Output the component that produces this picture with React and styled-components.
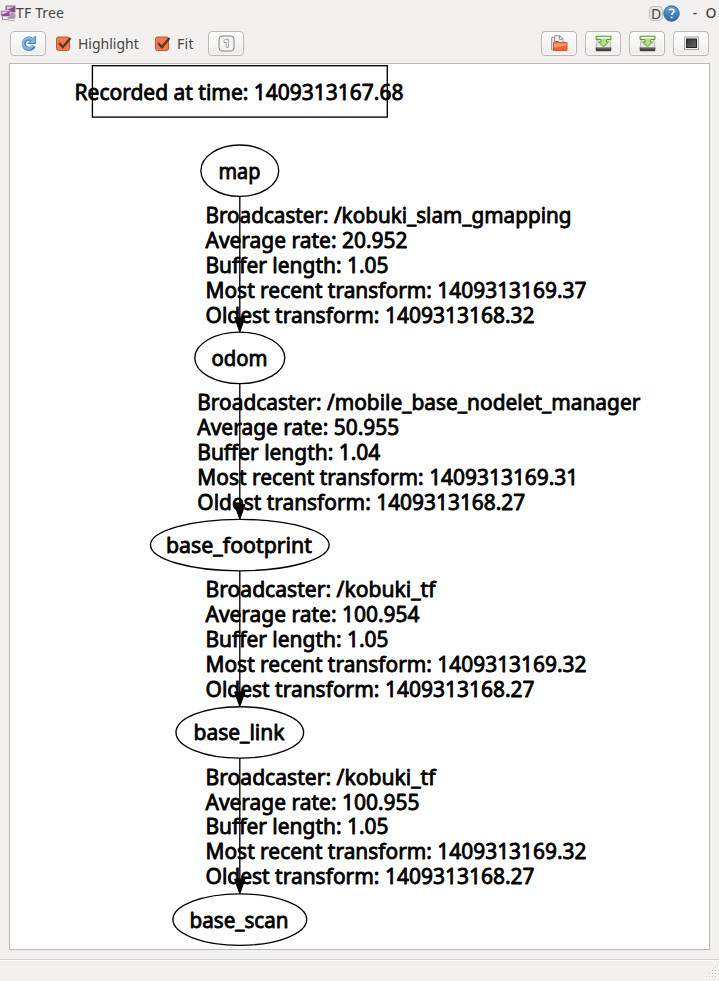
import React from "react";
import styled, { createGlobalStyle } from "styled-components";

const GlobalStyle = createGlobalStyle`
  * { box-sizing: border-box; }
  body { margin: 0; background: #f2f1f0; overflow: hidden; }
`;

const Window = styled.div`
  display: flex;
  flex-direction: column;
  width: 719px;
  height: 981px;
  background: #f2f1f0;
  color: #454545;
  font-family: "Noto Sans", "Open Sans", sans-serif;
  font-size: 14px;
`;

const TitleBar = styled.header`
  display: flex;
  align-items: center;
  height: 26px;
  flex: none;
  padding-right: 2px;
`;

const Title = styled.span`
  flex: 1;
  line-height: 26px;
  letter-spacing: 0.15px;
`;

const DockButton = styled.span`
  width: 14px;
  height: 15px;
  border: 1px solid #c3beb8;
  border-radius: 4px;
  background: #e9e7e4;
  font-size: 14px;
  line-height: 13px;
  text-align: center;
`;

const WindowMark = styled.span`
  width: ${(p) => p.$width}px;
  margin-left: ${(p) => p.$gap}px;
  line-height: 26px;
  font-weight: 500;
  text-align: center;
`;

const Toolbar = styled.div`
  display: flex;
  align-items: center;
  height: 35px;
  flex: none;
  padding: 0 10px;
`;

const ToolButton = styled.button`
  display: flex;
  align-items: center;
  justify-content: center;
  width: 36px;
  height: 25px;
  margin-left: ${(p) => p.$gap || 0}px;
  padding: 0;
  border: 1px solid #bbb8b5;
  border-radius: 4px;
  background: linear-gradient(#fdfdfd, #eeedeb);
  box-shadow: inset 0 0 0 1px rgba(255, 255, 255, 0.6);
`;

const CheckLabel = styled.label`
  display: flex;
  align-items: center;
  gap: 6px;
  width: ${(p) => p.$width}px;
  margin-left: ${(p) => p.$gap}px;
  line-height: 20px;
  letter-spacing: ${(p) => p.$tracking}px;
  white-space: nowrap;
`;

const FileActions = styled.div`
  display: flex;
  gap: 8px;
  margin-left: auto;
`;

const Canvas = styled.main`
  width: 701px;
  height: 887px;
  flex: none;
  margin: 2px 0 0 9px;
  border: 1px solid #bcbab8;
  background: #fff;
`;

const Graph = styled.svg`
  display: block;
  font-family: "Noto Sans", "Open Sans", sans-serif;
  font-size: 22px;
`;

const Outline = styled.g`
  fill: none;
  stroke: #000;
  stroke-width: 1.35;
`;

const GraphText = styled.text`
  fill: #000;
  stroke: #000;
  stroke-width: 0.85;
  stroke-linejoin: round;
`;

const StatusBar = styled.footer`
  display: flex;
  justify-content: flex-end;
  align-items: flex-end;
  height: 22px;
  margin-top: auto;
  border-top: 1px solid #d5d3d1;
  box-shadow: inset 0 1px #fff;
`;

const AppIcon = () => (
  <svg width="16" height="18" viewBox="0 0 16 18">
    <path d="M2.500 12v3.500h6" fill="none" stroke="#999" strokeWidth="1.2" />
    <rect x="5.5" y="1.5" width="10" height="7" rx="1" fill="#8d4b91" stroke="#bbb" />
    <path d="M6.500 2.500h8L7 6z" fill="#dcc5de" />
    <rect x="8" y="9.500" width="7" height="5" rx="1" fill="#b78bb9" stroke="#aaa" />
    <rect x="1" y="6.500" width="9" height="6" rx="1" fill="#8d4b91" stroke="#c5c5c5" />
    <path d="M2 7.500h7L2.500 10.500z" fill="#e5d3e6" />
    <path d="M8 16.500h7" stroke="#bbb" />
  </svg>
);

const HelpIcon = () => (
  <svg width="17" height="17" viewBox="0 0 17 17">
    <defs>
      <linearGradient id="help" x2="0" y2="1">
        <stop stopColor="#69a4d5" />
        <stop offset="1" stopColor="#2669a5" />
      </linearGradient>
    </defs>
    <circle cx="8.500" cy="8.500" r="7.700" fill="url(#help)" stroke="#28639b" />
    <path d="M6 5.300c1.200-1.500 5-1.400 5 .8 0 1.800-2.300 1.700-2.300 3.900" fill="none" stroke="#fff" strokeWidth="1.600" />
    <circle cx="8.600" cy="12.500" r="1.100" fill="#fff" />
  </svg>
);

const RefreshIcon = () => (
  <svg width="17" height="17" viewBox="0 0 17 17">
    <path d="M13.800 10.800A5.200 5.200 0 1 1 11.700 4.300" fill="none" stroke="#3d7fc1" strokeWidth="4.200" />
    <path d="M15.300 1.300V8.500H8L10.700 5.800 13 3.700z" fill="#84b6e6" stroke="#3d7fc1" strokeLinejoin="round" />
    <path d="M13 10.800A5.200 5.200 0 1 1 12.200 4.900" fill="none" stroke="#84b6e6" strokeWidth="2.400" />
  </svg>
);

const CheckIcon = () => (
  <svg width="17" height="17" viewBox="0 0 17 17">
    <rect x="1.500" y="2" width="13" height="13.500" rx="2" fill="#f3794f" stroke="#bd5c3b" />
    <path d="M4.200 8l3.600 4.300L15.500 3" fill="none" stroke="#54382f" strokeWidth="2.300" />
  </svg>
);

const FitOneIcon = () => (
  <svg width="17" height="17" viewBox="0 0 17 17">
    <rect x="1" y="1" width="15" height="15" rx="3" fill="#f4f4f3" stroke="#858585" />
    <path d="M6 5.500q1-1.200 2.300-1.200h2.200v8H8.200V7.500H6z" fill="#fff" stroke="#999" strokeWidth=".9" />
  </svg>
);

const OpenIcon = () => (
  <svg width="17" height="17" viewBox="0 0 17 17">
    <path d="M.7 15V2.500h3V.7h5l3.300 3V14z" fill="#eee" stroke="#909090" />
    <path d="M3.500 2.500V12M8.500 1v3.200h3.300" fill="none" stroke="#909090" />
    <path d="M2.500 8l1-1.500h4l1 1H16v8H2.500z" fill="#ed6534" stroke="#cf5a30" />
    <path d="M3 8.500h12.500v2L3 12.500z" fill="#f69a74" />
  </svg>
);

const SaveIcon = () => (
  <svg width="17" height="17" viewBox="0 0 17 17">
    <path d="M2.500 3h12l1.500 10H1z" fill="#e7e7e5" stroke="#b5b5b5" />
    <rect x=".7" y="12.300" width="15.600" height="4" rx="1" fill="#444" />
    <path d="M1.500 12.800h14" stroke="#aaa" />
    <path d="M1 1.200h15v3.300h-4.500V7H13.500l-5 4.800L3.500 7H6V4.500H1z" fill="#b6df80" stroke="#5f9d2d" />
    <path d="M2.500 2h12v1.500h-12z" fill="#fff" />
  </svg>
);

const ImageIcon = () => (
  <svg width="17" height="17" viewBox="0 0 17 17">
    <defs>
      <linearGradient id="shot" x2="1" y2="1">
        <stop stopColor="#333" />
        <stop offset="1" stopColor="#666" />
      </linearGradient>
    </defs>
    <rect x="1.500" y="2" width="14" height="12.500" fill="#f2f2f1" stroke="#a6a6a6" />
    <rect x="3.500" y="4" width="10" height="8.500" fill="url(#shot)" stroke="#222" />
  </svg>
);

const gripDots = [[9, 1], [6, 4], [9, 4], [3, 7], [6, 7], [9, 7], [0, 10], [3, 10], [6, 10], [9, 10]];

const ResizeGrip = () => (
  <svg width="13" height="15" viewBox="0 0 13 15">
    {gripDots.map(([x, y]) => (
      <g key={`${x}-${y}`}>
        <rect x={x} y={y} width="2" height="2" fill="#fff" />
        <rect x={x} y={y} width="1" height="1" fill="#bbb8b4" />
      </g>
    ))}
  </svg>
);

const nodes = [
  { name: "map", cy: 170.7, rx: 38.9, x: 218.5, width: 42 },
  { name: "odom", cy: 357.9, rx: 45, x: 211.5, width: 56 },
  { name: "base_footprint", cy: 545.1, rx: 89.3, x: 166, width: 146 },
  { name: "base_link", cy: 732.4, rx: 63.8, x: 193.5, width: 91 },
  { name: "base_scan", cy: 919.6, rx: 66.9, x: 189.5, width: 99 },
];

const transforms = [
  { x: 205.5, y: 222.9, lines: [["Broadcaster: /kobuki_slam_gmapping", 366], ["Average rate: 20.952", 202], ["Buffer length: 1.05", 183], ["Most recent transform: 1409313169.37", 381], ["Oldest transform: 1409313168.32", 329]] },
  { x: 197.3, y: 410.1, lines: [["Broadcaster: /mobile_base_nodelet_manager", 443], ["Average rate: 50.955", 202], ["Buffer length: 1.04", 183], ["Most recent transform: 1409313169.31", 381], ["Oldest transform: 1409313168.27", 328]] },
  { x: 205.5, y: 597.3, lines: [["Broadcaster: /kobuki_tf", 230], ["Average rate: 100.954", 214], ["Buffer length: 1.05", 183], ["Most recent transform: 1409313169.32", 381], ["Oldest transform: 1409313168.27", 329]] },
  { x: 205.5, y: 784.6, lines: [["Broadcaster: /kobuki_tf", 230], ["Average rate: 100.955", 214], ["Buffer length: 1.05", 183], ["Most recent transform: 1409313169.32", 381], ["Oldest transform: 1409313168.27", 329]] },
];

const Label = ({ x, y, width, children }) => (
  <GraphText x={x} y={y} textLength={width} lengthAdjust="spacingAndGlyphs">{children}</GraphText>
);

const TransformTree = () => (
  <Graph width="699" height="885" viewBox="10 64 699 885">
    <Outline>
      <rect x="92.400" y="65.700" width="294.900" height="51.400" />
      {nodes.map((n) => <ellipse key={n.name} cx="239.800" cy={n.cy} rx={n.rx} ry="25.700" />)}
      {nodes.slice(1).map((n) => <path key={n.name} d={`M239.800 ${n.cy - 161.5}V${n.cy - 39}`} />)}
    </Outline>
    {nodes.slice(1).map((n) => (
      <path key={n.name} d={`M234.600 ${n.cy - 40.5}h10.400l-5.200 14.700z`} stroke="#000" />
    ))}
    <Label x={74.5} y={99.8} width={329}>Recorded at time: 1409313167.68</Label>
    {nodes.map((n) => <Label key={n.name} x={n.x} y={n.cy + 8} width={n.width}>{n.name}</Label>)}
    {transforms.map((t) => t.lines.map(([text, width], i) => (
      <Label key={`${t.y}-${i}`} x={t.x} y={t.y + i * 24.9} width={width}>{text}</Label>
    )))}
  </Graph>
);

export default function App() {
  return (
    <>
      <GlobalStyle />
      <Window>
        <TitleBar>
          <AppIcon />
          <Title>TF Tree</Title>
          <DockButton>D</DockButton>
          <HelpIcon />
          <WindowMark $width={8} $gap={11}>-</WindowMark>
          <WindowMark $width={12} $gap={6}>O</WindowMark>
        </TitleBar>
        <Toolbar>
          <ToolButton aria-label="Refresh"><RefreshIcon /></ToolButton>
          <CheckLabel $width={85} $gap={9} $tracking={0}><CheckIcon />Highlight</CheckLabel>
          <CheckLabel $width={40} $gap={14} $tracking={0.3}><CheckIcon />Fit</CheckLabel>
          <ToolButton aria-label="Reset zoom" $gap={14}><FitOneIcon /></ToolButton>
          <FileActions>
            <ToolButton aria-label="Open"><OpenIcon /></ToolButton>
            <ToolButton aria-label="Save dot"><SaveIcon /></ToolButton>
            <ToolButton aria-label="Save SVG"><SaveIcon /></ToolButton>
            <ToolButton aria-label="Save image"><ImageIcon /></ToolButton>
          </FileActions>
        </Toolbar>
        <Canvas><TransformTree /></Canvas>
        <StatusBar><ResizeGrip /></StatusBar>
      </Window>
    </>
  );
}
